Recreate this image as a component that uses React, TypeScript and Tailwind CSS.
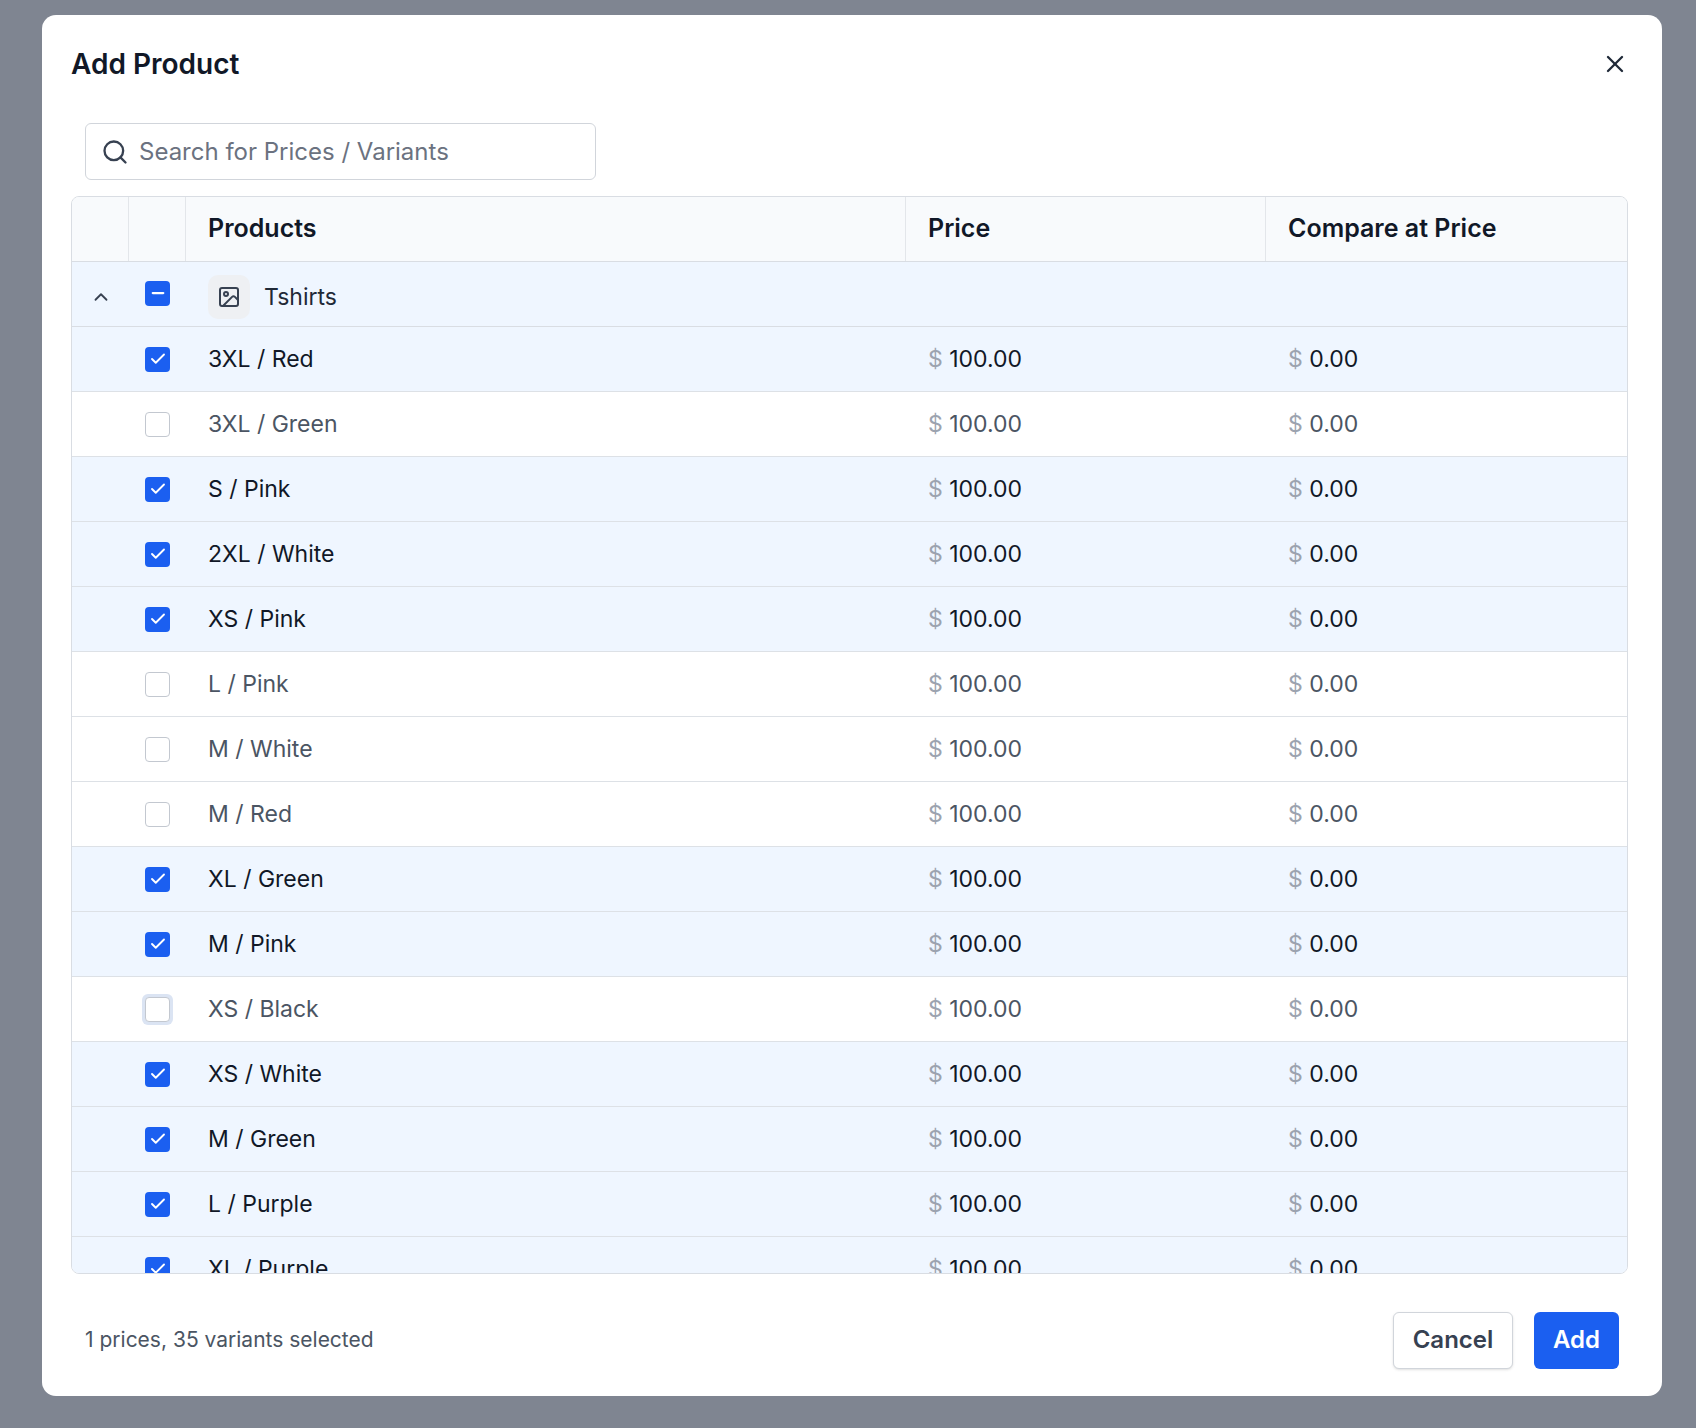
import React from 'react';
import { X, Search, ChevronUp, Check, Minus, ImageIcon } from 'lucide-react';

const rows: [string, boolean][] = [
  ['3XL / Red', true],
  ['3XL / Green', false],
  ['S / Pink', true],
  ['2XL / White', true],
  ['XS / Pink', true],
  ['L / Pink', false],
  ['M / White', false],
  ['M / Red', false],
  ['XL / Green', true],
  ['M / Pink', true],
  ['XS / Black', false],
  ['XS / White', true],
  ['M / Green', true],
  ['L / Purple', true],
  ['XL / Purple', true],
  ['S / Purple', true],
];

function Box({ checked, focus }: { checked: boolean; focus?: boolean }) {
  if (checked)
    return (
      <span className="flex h-[25px] w-[25px] items-center justify-center rounded-[4px] bg-[#1b5ff0]">
        <Check className="h-[18px] w-[18px] text-white" strokeWidth={2.5} />
      </span>
    );
  return (
    <span className={focus ? 'rounded-[6px] p-[3px] bg-[#dbe4f3]' : ''}>
      <span className="block h-[25px] w-[25px] rounded-[4px] border border-[#c3c8d0] bg-white" />
    </span>
  );
}

export default function App() {
  return (
    <div className="flex h-[1428px] w-[1696px] bg-[#7f8591] pt-[15px] pl-[42px]" style={{ fontFamily: 'Inter, "Noto Sans", sans-serif' }}>
      <div className="flex h-[1381px] w-[1620px] flex-col rounded-[14px] bg-white px-[29px]">
        <div className="flex h-[96px] items-center justify-between pt-[2px]">
          <h2 className="text-[28px] font-semibold text-[#111827]">Add Product</h2>
          <X className="mr-[4px] h-[28px] w-[28px] text-[#1f2937]" strokeWidth={2} />
        </div>
        <div className="mb-[16px] w-[540px] rounded-[8px] px-[14px] pt-[12px]">
          <div className="flex h-[57px] w-[511px] items-center gap-[10px] rounded-[6px] border border-[#d1d5db] px-[15px]">
            <Search className="h-[28px] w-[28px] text-[#374151]" strokeWidth={2} />
            <span className="text-[24px] text-[#6b7280]">Search for Prices / Variants</span>
          </div>
        </div>
        <div className="h-[1078px] w-[1557px] overflow-hidden rounded-[8px] border border-[#d9dde3] text-[23px]">
          <div className="flex h-[65px] border-b border-[#d9dde3] bg-[#f8fafc] font-semibold text-[#111827] text-[25px]">
            <div className="w-[57px] border-r border-[#e3e6ea]" />
            <div className="w-[57px] border-r border-[#e3e6ea]" />
            <div className="flex w-[720px] items-center border-r border-[#e3e6ea] pl-[22px]">Products</div>
            <div className="flex w-[360px] items-center border-r border-[#e3e6ea] pl-[22px]">Price</div>
            <div className="flex flex-1 items-center pl-[22px]">Compare at Price</div>
          </div>
          <div className="flex h-[65px] items-center border-b border-[#d9dde3] bg-[#eff6ff] pt-[6px] text-[#1f2937]">
            <div className="flex w-[57px] justify-center">
              <ChevronUp className="h-[22px] w-[22px] text-[#374151]" />
            </div>
            <div className="flex w-[57px] justify-center pb-[8px]">
              <span className="flex h-[25px] w-[25px] items-center justify-center rounded-[4px] bg-[#1b5ff0]">
                <Minus className="h-[18px] w-[18px] text-white" strokeWidth={3} />
              </span>
            </div>
            <div className="flex items-center gap-[14px] pl-[22px]">
              <span className="flex h-[44px] w-[42px] items-center justify-center rounded-[10px] bg-[#eef0f3]">
                <ImageIcon className="h-[24px] w-[24px] text-[#374151]" />
              </span>
              <span>Tshirts</span>
            </div>
          </div>
          {rows.map(([name, on]) => (
            <div key={name} className={`flex h-[65px] shrink-0 items-center border-b border-[#dde1e6] ${on ? 'bg-[#eff6ff] text-[#111827]' : 'bg-white text-[#4b5563]'}`}>
              <div className="w-[57px]" />
              <div className="flex w-[57px] justify-center">
                <Box checked={on} focus={name === 'XS / Black'} />
              </div>
              <div className="w-[720px] pl-[22px]">{name}</div>
              <div className="w-[360px] pl-[22px]">
                <span className="text-[#9ca3af]">$</span> <span className={on ? 'text-[#111827]' : 'text-[#4b5563]'}>100.00</span>
              </div>
              <div className="flex-1 pl-[22px]">
                <span className="text-[#9ca3af]">$</span> <span className={on ? 'text-[#111827]' : 'text-[#4b5563]'}>0.00</span>
              </div>
            </div>
          ))}
        </div>
        <div className="flex flex-1 items-center justify-between pl-[14px] pr-[14px] pt-[10px]">
          <span className="text-[21px] text-[#4b5563]">1 prices, 35 variants selected</span>
          <div className="flex gap-[21px]">
            <button className="h-[57px] w-[120px] rounded-[6px] border border-[#d1d5db] bg-white text-[24px] font-semibold text-[#374151] shadow-sm">Cancel</button>
            <button className="h-[57px] w-[85px] rounded-[6px] bg-[#1b5ff0] text-[24px] font-semibold text-white">Add</button>
          </div>
        </div>
      </div>
    </div>
  );
}
